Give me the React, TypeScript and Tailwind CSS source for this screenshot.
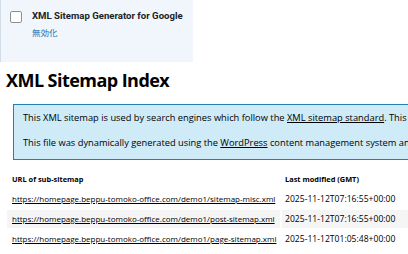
import React from 'react';

const rows = [
  { loc: 'https://homepage.beppu-tomoko-office.com/demo1/sitemap-misc.xml', mod: '2025-11-12T07:16:55+00:00' },
  { loc: 'https://homepage.beppu-tomoko-office.com/demo1/post-sitemap.xml', mod: '2025-11-12T07:16:55+00:00' },
  { loc: 'https://homepage.beppu-tomoko-office.com/demo1/page-sitemap.xml', mod: '2025-11-12T01:05:48+00:00' },
];

export default function App() {
  return (
    <div className="w-[408px] h-[254px] overflow-hidden bg-white">
      {/* plugin row (WordPress admin) */}
      <div className="w-[193px] h-[62px] bg-[#f0f6fc] border-l border-[#d3dde8] flex pl-[9px] pt-[11px] gap-[10px]">
        <div className="w-[12px] h-[12px] shrink-0 rounded-[2px] border border-[#8c8f94] bg-white" />
        <div className="flex flex-col">
          <div className="font-['Roboto',sans-serif] font-bold text-[9.6px] leading-[12px] text-[#1d2327] -mt-[1px]">
            XML Sitemap Generator for Google
          </div>
          <div className="font-['Noto_Sans_CJK_JP',sans-serif] text-[8.5px] leading-[12px] text-[#2271b1] mt-[4px]">
            無効化
          </div>
        </div>
      </div>

      {/* sitemap page */}
      <div className="font-['Open_Sans',sans-serif] text-black">
        <h1 className="mt-[9px] pl-[6px] text-[18px] leading-[18px] font-bold tracking-[-0.55px]">XML Sitemap Index</h1>

        <div className="mt-[15px] ml-[13px] w-[800px] h-[56px] border border-[#2580b2] bg-[#cfebf7] pl-[9px] pt-[7px] text-[9.3px] leading-[12px]">
          <p>
            This XML sitemap is used by search engines which follow the{' '}
            <a className="underline">XML sitemap standard</a>. This file contains links to sub-sitemaps, follow them to see the actual sitemap content.
          </p>
          <p className="mt-[13px]">
            This file was dynamically generated using the <a className="underline">WordPress</a> content management system and XML Sitemap Generator for Google.
          </p>
        </div>

        <div className="mt-[10px] ml-[7px] grid grid-cols-[273px_200px] gap-[2px]">
          <div className="pl-[5px] h-[18px] text-[7.4px] leading-[18px] font-bold">URL of sub-sitemap</div>
          <div className="pl-[3px] h-[18px] text-[7.4px] leading-[18px] font-bold">Last modified (GMT)</div>
          {rows.map((r, i) => (
            <React.Fragment key={r.loc}>
              <div className={`pl-[5px] h-[18px] text-[8px] leading-[18px] whitespace-nowrap ${i === 1 ? 'bg-[#f5f5f5]' : ''}`}>
                <a className="underline text-black">{r.loc}</a>
              </div>
              <div className={`pl-[3px] h-[18px] text-[8.6px] leading-[18px] whitespace-nowrap ${i === 1 ? 'bg-[#f5f5f5]' : ''}`}>
                {r.mod}
              </div>
            </React.Fragment>
          ))}
        </div>
      </div>
    </div>
  );
}
